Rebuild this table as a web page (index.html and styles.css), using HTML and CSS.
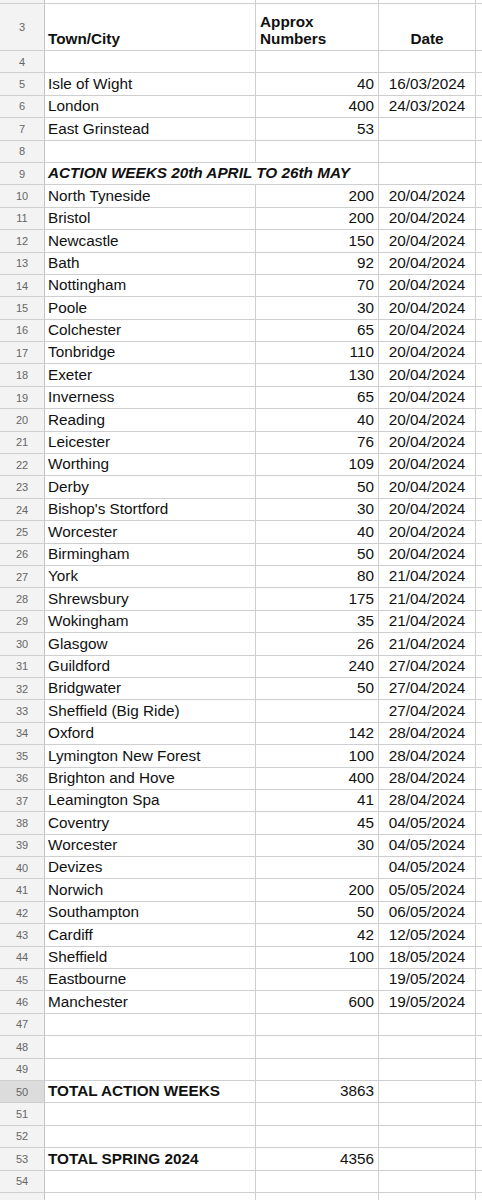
FILE: index.html
```html
<!DOCTYPE html>
<html>
<head>
<meta charset="utf-8">
<link rel="stylesheet" href="styles.css">
</head>
<body>
<div class="sheet">
  <div class="row stub"><div class="rh"></div><div class="c a"></div><div class="c b"></div><div class="c d"></div><div class="c e"></div></div>
  <div class="row head"><div class="rh">3</div><div class="c a bold">Town/City</div><div class="c b bold left">Approx<br>Numbers</div><div class="c d bold">Date</div><div class="c e"></div></div>
  <div class="row"><div class="rh">4</div><div class="c a"></div><div class="c b"></div><div class="c d"></div><div class="c e"></div></div>
  <div class="row"><div class="rh">5</div><div class="c a">Isle of Wight</div><div class="c b">40</div><div class="c d">16/03/2024</div><div class="c e"></div></div>
  <div class="row"><div class="rh">6</div><div class="c a">London</div><div class="c b">400</div><div class="c d">24/03/2024</div><div class="c e"></div></div>
  <div class="row"><div class="rh">7</div><div class="c a">East Grinstead</div><div class="c b">53</div><div class="c d"></div><div class="c e"></div></div>
  <div class="row"><div class="rh">8</div><div class="c a"></div><div class="c b"></div><div class="c d"></div><div class="c e"></div></div>
  <div class="row"><div class="rh">9</div><div class="c ab bold italic">ACTION WEEKS 20th APRIL TO 26th MAY</div><div class="c d"></div><div class="c e"></div></div>
  <div class="row"><div class="rh">10</div><div class="c a">North Tyneside</div><div class="c b">200</div><div class="c d">20/04/2024</div><div class="c e"></div></div>
  <div class="row"><div class="rh">11</div><div class="c a">Bristol</div><div class="c b">200</div><div class="c d">20/04/2024</div><div class="c e"></div></div>
  <div class="row"><div class="rh">12</div><div class="c a">Newcastle</div><div class="c b">150</div><div class="c d">20/04/2024</div><div class="c e"></div></div>
  <div class="row"><div class="rh">13</div><div class="c a">Bath</div><div class="c b">92</div><div class="c d">20/04/2024</div><div class="c e"></div></div>
  <div class="row"><div class="rh">14</div><div class="c a">Nottingham</div><div class="c b">70</div><div class="c d">20/04/2024</div><div class="c e"></div></div>
  <div class="row"><div class="rh">15</div><div class="c a">Poole</div><div class="c b">30</div><div class="c d">20/04/2024</div><div class="c e"></div></div>
  <div class="row"><div class="rh">16</div><div class="c a">Colchester</div><div class="c b">65</div><div class="c d">20/04/2024</div><div class="c e"></div></div>
  <div class="row"><div class="rh">17</div><div class="c a">Tonbridge</div><div class="c b">110</div><div class="c d">20/04/2024</div><div class="c e"></div></div>
  <div class="row"><div class="rh">18</div><div class="c a">Exeter</div><div class="c b">130</div><div class="c d">20/04/2024</div><div class="c e"></div></div>
  <div class="row"><div class="rh">19</div><div class="c a">Inverness</div><div class="c b">65</div><div class="c d">20/04/2024</div><div class="c e"></div></div>
  <div class="row"><div class="rh">20</div><div class="c a">Reading</div><div class="c b">40</div><div class="c d">20/04/2024</div><div class="c e"></div></div>
  <div class="row"><div class="rh">21</div><div class="c a">Leicester</div><div class="c b">76</div><div class="c d">20/04/2024</div><div class="c e"></div></div>
  <div class="row"><div class="rh">22</div><div class="c a">Worthing</div><div class="c b">109</div><div class="c d">20/04/2024</div><div class="c e"></div></div>
  <div class="row"><div class="rh">23</div><div class="c a">Derby</div><div class="c b">50</div><div class="c d">20/04/2024</div><div class="c e"></div></div>
  <div class="row"><div class="rh">24</div><div class="c a">Bishop's Stortford</div><div class="c b">30</div><div class="c d">20/04/2024</div><div class="c e"></div></div>
  <div class="row"><div class="rh">25</div><div class="c a">Worcester</div><div class="c b">40</div><div class="c d">20/04/2024</div><div class="c e"></div></div>
  <div class="row"><div class="rh">26</div><div class="c a">Birmingham</div><div class="c b">50</div><div class="c d">20/04/2024</div><div class="c e"></div></div>
  <div class="row"><div class="rh">27</div><div class="c a">York</div><div class="c b">80</div><div class="c d">21/04/2024</div><div class="c e"></div></div>
  <div class="row"><div class="rh">28</div><div class="c a">Shrewsbury</div><div class="c b">175</div><div class="c d">21/04/2024</div><div class="c e"></div></div>
  <div class="row"><div class="rh">29</div><div class="c a">Wokingham</div><div class="c b">35</div><div class="c d">21/04/2024</div><div class="c e"></div></div>
  <div class="row"><div class="rh">30</div><div class="c a">Glasgow</div><div class="c b">26</div><div class="c d">21/04/2024</div><div class="c e"></div></div>
  <div class="row"><div class="rh">31</div><div class="c a">Guildford</div><div class="c b">240</div><div class="c d">27/04/2024</div><div class="c e"></div></div>
  <div class="row"><div class="rh">32</div><div class="c a">Bridgwater</div><div class="c b">50</div><div class="c d">27/04/2024</div><div class="c e"></div></div>
  <div class="row"><div class="rh">33</div><div class="c a">Sheffield (Big Ride)</div><div class="c b"></div><div class="c d">27/04/2024</div><div class="c e"></div></div>
  <div class="row"><div class="rh">34</div><div class="c a">Oxford</div><div class="c b">142</div><div class="c d">28/04/2024</div><div class="c e"></div></div>
  <div class="row"><div class="rh">35</div><div class="c a">Lymington New Forest</div><div class="c b">100</div><div class="c d">28/04/2024</div><div class="c e"></div></div>
  <div class="row"><div class="rh">36</div><div class="c a">Brighton and Hove</div><div class="c b">400</div><div class="c d">28/04/2024</div><div class="c e"></div></div>
  <div class="row"><div class="rh">37</div><div class="c a">Leamington Spa</div><div class="c b">41</div><div class="c d">28/04/2024</div><div class="c e"></div></div>
  <div class="row"><div class="rh">38</div><div class="c a">Coventry</div><div class="c b">45</div><div class="c d">04/05/2024</div><div class="c e"></div></div>
  <div class="row"><div class="rh">39</div><div class="c a">Worcester</div><div class="c b">30</div><div class="c d">04/05/2024</div><div class="c e"></div></div>
  <div class="row"><div class="rh">40</div><div class="c a">Devizes</div><div class="c b"></div><div class="c d">04/05/2024</div><div class="c e"></div></div>
  <div class="row"><div class="rh">41</div><div class="c a">Norwich</div><div class="c b">200</div><div class="c d">05/05/2024</div><div class="c e"></div></div>
  <div class="row"><div class="rh">42</div><div class="c a">Southampton</div><div class="c b">50</div><div class="c d">06/05/2024</div><div class="c e"></div></div>
  <div class="row"><div class="rh">43</div><div class="c a">Cardiff</div><div class="c b">42</div><div class="c d">12/05/2024</div><div class="c e"></div></div>
  <div class="row"><div class="rh">44</div><div class="c a">Sheffield</div><div class="c b">100</div><div class="c d">18/05/2024</div><div class="c e"></div></div>
  <div class="row"><div class="rh">45</div><div class="c a">Eastbourne</div><div class="c b"></div><div class="c d">19/05/2024</div><div class="c e"></div></div>
  <div class="row"><div class="rh">46</div><div class="c a">Manchester</div><div class="c b">600</div><div class="c d">19/05/2024</div><div class="c e"></div></div>
  <div class="row"><div class="rh">47</div><div class="c a"></div><div class="c b"></div><div class="c d"></div><div class="c e"></div></div>
  <div class="row"><div class="rh">48</div><div class="c a"></div><div class="c b"></div><div class="c d"></div><div class="c e"></div></div>
  <div class="row"><div class="rh">49</div><div class="c a"></div><div class="c b"></div><div class="c d"></div><div class="c e"></div></div>
  <div class="row"><div class="rh sel">50</div><div class="c a bold">TOTAL ACTION WEEKS</div><div class="c b">3863</div><div class="c d"></div><div class="c e"></div></div>
  <div class="row"><div class="rh">51</div><div class="c a"></div><div class="c b"></div><div class="c d"></div><div class="c e"></div></div>
  <div class="row"><div class="rh">52</div><div class="c a"></div><div class="c b"></div><div class="c d"></div><div class="c e"></div></div>
  <div class="row"><div class="rh">53</div><div class="c a bold">TOTAL SPRING 2024</div><div class="c b">4356</div><div class="c d"></div><div class="c e"></div></div>
  <div class="row"><div class="rh">54</div><div class="c a"></div><div class="c b"></div><div class="c d"></div><div class="c e"></div></div>
  <div class="row"><div class="rh"></div><div class="c a"></div><div class="c b"></div><div class="c d"></div><div class="c e"></div></div>
</div>
</body>
</html>
```

FILE: styles.css
```css
html, body {
  margin: 0;
  padding: 0;
  background: #ffffff;
  overflow: hidden;
}

.sheet {
  width: 482px;
  height: 1200px;
  overflow: hidden;
  font-family: "Liberation Sans", Arial, sans-serif;
  font-size: 15.3px;
  color: #111111;
}

.row {
  display: grid;
  grid-template-columns: 45px 211px 123px 97px 6px;
  height: 22.4px;
}

.row.stub {
  height: 4px;
}

.row.head {
  height: 47px;
}

.rh,
.c {
  box-sizing: border-box;
  border-right: 1px solid #cfcfcf;
  border-bottom: 1px solid #cfcfcf;
  overflow: visible;
  white-space: nowrap;
}

.rh {
  background: #f3f3f3;
  color: #666666;
  font-size: 11px;
  display: flex;
  align-items: center;
  justify-content: center;
  border-right: 1px solid #c4c4c4;
}

.rh.sel {
  background: #dcdcdc;
}

.c {
  display: flex;
  align-items: flex-end;
  line-height: 18px;
  padding: 0 4px 2px 3px;
}

.a {
  justify-content: flex-start;
}

.ab {
  grid-column: span 2;
  justify-content: flex-start;
}

.b {
  justify-content: flex-end;
}

.d {
  justify-content: center;
  padding: 0 1px 2px 1px;
}

.e {
  border-right: none;
}

.head .c {
  line-height: 17px;
  padding-bottom: 3px;
}

.head .b.left {
  justify-content: flex-start;
  text-align: left;
  padding-left: 4px;
}

.bold {
  font-weight: bold;
}

.italic {
  font-style: italic;
}
```
